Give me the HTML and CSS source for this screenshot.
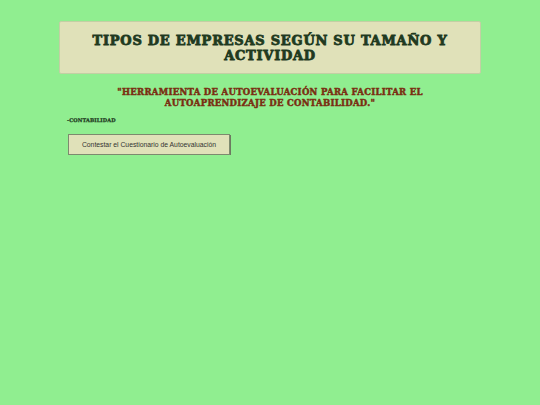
FILE: index.html
```html
<!DOCTYPE html>
<html lang="es">
<head>
<meta charset="utf-8">
<link rel="stylesheet" href="styles.css">
</head>
<body>
<header class="banner">
  <h1 class="title">TIPOS DE EMPRESAS SEGÚN SU TAMAÑO Y ACTIVIDAD</h1>
</header>
<p class="quote">"HERRAMIENTA DE AUTOEVALUACIÓN PARA FACILITAR EL AUTOAPRENDIZAJE DE CONTABILIDAD."</p>
<p class="author">-CONTABILIDAD</p>
<div class="actions">
  <button class="btn" type="button">Contestar el Cuestionario de Autoevaluación</button>
</div>
</body>
</html>
```

FILE: styles.css
```css
html, body {
  margin: 0;
  padding: 0;
  background: #90ee90;
}
body {
  padding: 21px 59px 0 59px;
  font-family: "DejaVu Serif", serif;
}
.banner {
  background: #e0e1b9;
  border: 1px solid #c3cfa4;
  border-radius: 2px;
  height: 51px;
  display: flex;
  align-items: center;
  justify-content: center;
}
.title {
  margin: 0;
  width: 380px;
  text-align: center;
  font-family: "DejaVu Serif", serif;
  font-size: 13px;
  line-height: 15px;
  font-weight: 700;
  color: #1f3a1f;
  -webkit-text-stroke: 0.8px #1f3a1f;
  letter-spacing: 0.75px;
}
.quote {
  margin: 13px 0 0 0;
  text-align: center;
  font-family: "DejaVu Serif", serif;
  font-size: 8.5px;
  line-height: 11px;
  font-weight: 700;
  color: #7a2e12;
  -webkit-text-stroke: 0.45px #7a2e12;
  letter-spacing: 0.3px;
  padding: 0 45px;
}
.author {
  margin: 8px 0 0 8px;
  font-family: "DejaVu Serif", serif;
  font-size: 5px;
  font-weight: 700;
  color: #1f3a1f;
  -webkit-text-stroke: 0.25px #1f3a1f;
  letter-spacing: 0.1px;
}
.actions {
  margin: 9px 0 0 9px;
}
.btn {
  font-family: "Liberation Sans", Arial, sans-serif;
  font-size: 6.8px;
  color: #333;
  background: #e0e1b9;
  border: 1px solid #7d8a6e;
  box-shadow: 1px 1px 0 #6c7a60;
  width: 162px;
  height: 21px;
  padding: 0;
}
```
